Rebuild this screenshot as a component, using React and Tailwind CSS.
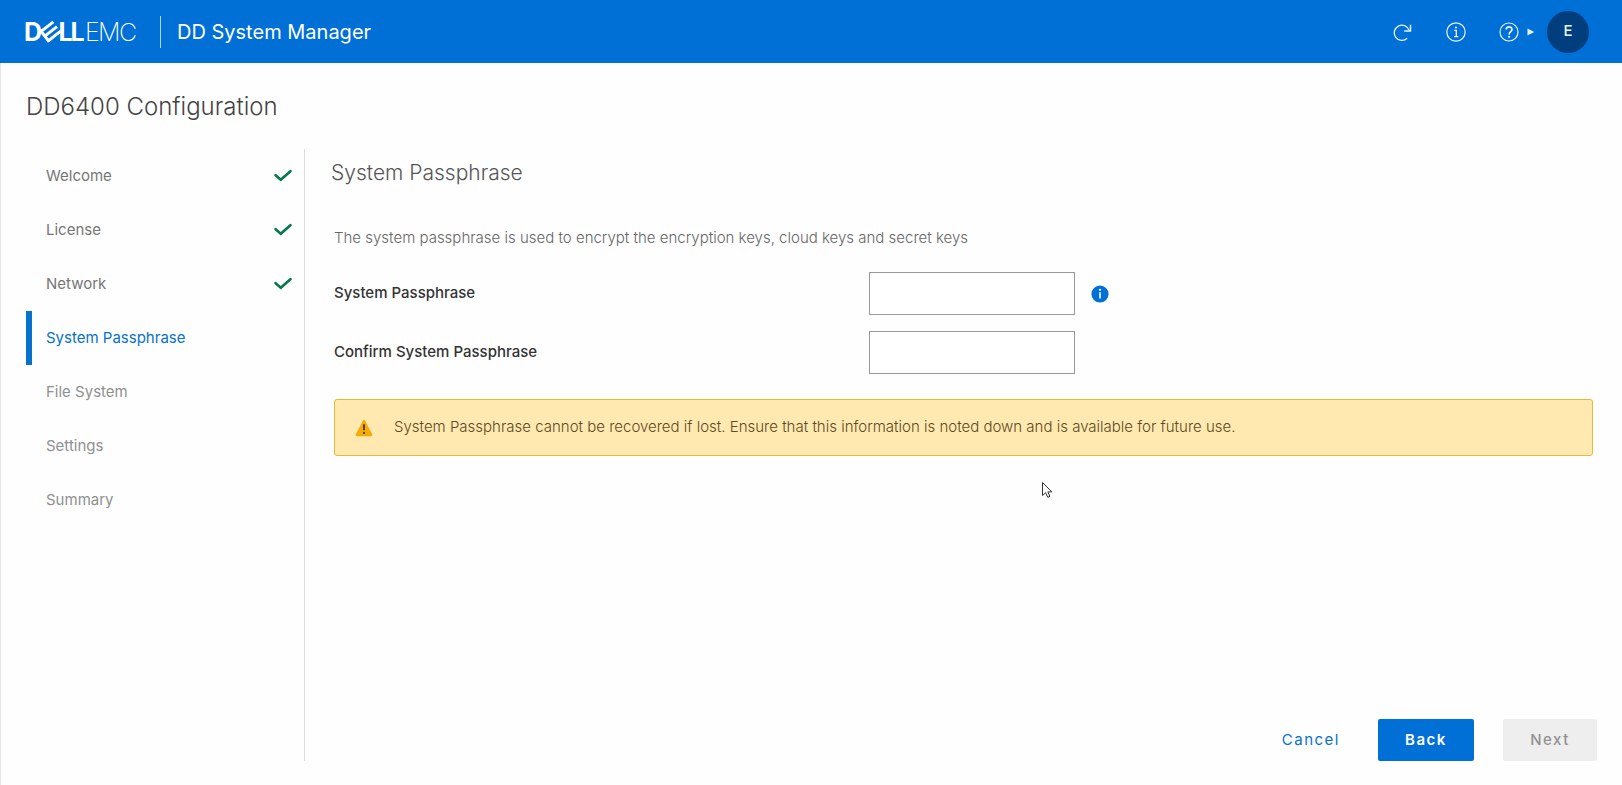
const steps = [
  { label: 'Welcome', state: 'done' },
  { label: 'License', state: 'done' },
  { label: 'Network', state: 'done' },
  { label: 'System Passphrase', state: 'active' },
  { label: 'File System', state: 'pending' },
  { label: 'Settings', state: 'pending' },
  { label: 'Summary', state: 'pending' },
];

const stepTone = {
  done: 'text-[#767676] border-transparent',
  active: 'text-[#0672cb] border-[#0672cb]',
  pending: 'text-[#909090] border-transparent',
};

function Logo() {
  return (
    <svg
      className="h-8 w-28 shrink-0"
      viewBox="0 0 112 32"
      fill="#fff"
      role="img"
      aria-label="Dell EMC"
      fontFamily="Inter, sans-serif"
    >
      <text x="-1" y="25" fontSize="25" fontWeight="700">D</text>
      <g transform="translate(25.3 15.8) rotate(-38)" stroke="#fff" strokeWidth="3" fill="none">
        <path d="M-7 -7.2V7.2" />
        <path d="M-7 -5.9H8.5M-7 0H8.5M-7 5.9H8.5" strokeWidth="2.9" />
      </g>
      <text x="33.5" y="25" fontSize="25" fontWeight="700">L</text>
      <text x="45.5" y="25" fontSize="25" fontWeight="700">L</text>
      <text x="60" y="25" fontSize="25" fontWeight="200">E</text>
      <text x="73" y="25" fontSize="25" fontWeight="200">M</text>
      <text x="94" y="25" fontSize="25" fontWeight="200">C</text>
    </svg>
  );
}

function RefreshIcon() {
  return (
    <svg className="size-5" viewBox="0 0 20 20" fill="none" stroke="currentColor" strokeWidth="1.3">
      <path d="M14.2 16.2A7.6 7.6 0 1 1 16 8.2" />
      <path d="M17.5 2.8V9H11.2" strokeWidth="1.5" />
    </svg>
  );
}

function InfoIcon() {
  return (
    <svg className="size-5" viewBox="0 0 20 20" fill="none" stroke="currentColor">
      <circle cx="10" cy="10" r="9.2" strokeWidth="1.2" />
      <path d="M8.2 8.3H10.3V14.6M8 14.7H12.4" strokeWidth="1.3" />
      <circle cx="10" cy="5.5" r="1.1" fill="currentColor" stroke="none" />
    </svg>
  );
}

function HelpIcon() {
  return (
    <svg className="size-5" viewBox="0 0 20 20" fill="none" stroke="currentColor">
      <circle cx="10" cy="10" r="9" strokeWidth="1.2" />
      <path d="M7.2 7.6C7.2 3.9 13 4 13 7.4C13 9.7 10.1 9.5 10.1 12.4" strokeWidth="1.7" />
      <circle cx="10.1" cy="14.8" r="1.1" fill="currentColor" stroke="none" />
    </svg>
  );
}

function CheckIcon() {
  return (
    <svg className="h-4 w-[18px]" viewBox="0 0 18 16" fill="none" stroke="#04784c" strokeWidth="2.6">
      <path d="M1.6 7.2L6.8 11.8L16.4 3.2" strokeLinecap="round" strokeLinejoin="miter" />
    </svg>
  );
}

function WarningIcon() {
  return (
    <svg className="size-[18px] shrink-0" viewBox="0 0 18 18" aria-hidden="true">
      <path
        d="M8 1.5Q9 .2 10 1.5L17.2 15.2Q17.8 17.2 16 17.2H2Q.2 17.2 .8 15.2Z"
        fill="#f5ab0a"
      />
      <path d="M9 5.2V11.2" stroke="#3b3320" strokeWidth="1.7" />
      <circle cx="9" cy="14" r="1.1" fill="#3b3320" />
    </svg>
  );
}

function PassphraseField({ id, label, info }) {
  return (
    <div className="flex items-center">
      <label htmlFor={id} className="w-[535px] text-[15px] font-medium text-[#333333]">
        {label}
      </label>
      <input
        id={id}
        type="password"
        className="h-[43px] w-[206px] border border-[#999999] bg-white px-3 text-[15px] outline-none"
      />
      {info && (
        <button type="button" aria-label="Passphrase requirements" className="ml-4">
          <svg className="size-[18px]" viewBox="0 0 18 18">
            <circle cx="9" cy="9" r="8.6" fill="#0070d6" />
            <path d="M9 7.3V13.6" stroke="#fff" strokeWidth="1.6" />
            <circle cx="9" cy="4.8" r="1.1" fill="#fff" />
          </svg>
        </button>
      )}
    </div>
  );
}

export default function App() {
  return (
    <div className="flex min-h-screen flex-col bg-[#fefefe] font-['Inter',sans-serif]">
      <header className="flex h-[63px] items-center bg-[#0070d6] pl-[25px] pr-[33px] text-white">
        <Logo />
        <div className="ml-[23px] h-8 w-px bg-white/70" />
        <h1 className="ml-4 text-xl">DD System Manager</h1>
        <div className="ml-auto flex items-center text-[#e4f5ff]">
          <button type="button" aria-label="Refresh">
            <RefreshIcon />
          </button>
          <button type="button" aria-label="Information" className="ml-[33px]">
            <InfoIcon />
          </button>
          <button type="button" aria-label="Help" className="ml-[33px] flex items-center gap-2">
            <HelpIcon />
            <svg className="size-2" viewBox="0 0 8 8" fill="currentColor">
              <path d="M.5 .6L7.2 4L.5 7.4Z" />
            </svg>
          </button>
          <button
            type="button"
            aria-label="Account"
            className="ml-3 size-[42px] rounded-full bg-[#003e7e] text-[15px] font-medium"
          >
            E
          </button>
        </div>
      </header>

      <main className="flex grow flex-col border-l border-[#e4e4e4] pb-6 pl-[25px] pr-[25px]">
        <h2 className="mt-7 text-2xl font-light text-[#444444]">DD6400 Configuration</h2>

        <div className="mt-[26px] flex grow">
          <nav aria-label="Configuration steps" className="w-[279px] shrink-0 border-r border-[#dcdcdc]">
            <ol>
              {steps.map(({ label, state }) => (
                <li key={label}>
                  <a
                    href="#"
                    aria-current={state === 'active' ? 'step' : undefined}
                    className={`flex h-[54px] items-center justify-between border-l-[6px] pl-[14px] pr-3 text-[15px] ${stepTone[state]}`}
                  >
                    {label}
                    {state === 'done' && <CheckIcon />}
                  </a>
                </li>
              ))}
            </ol>
          </nav>

          <section className="flex grow flex-col pl-[26px]">
            <h3 className="mt-2 text-[21px] font-light leading-8 text-[#555555]">System Passphrase</h3>

            <form className="flex grow flex-col">
              <div className="ml-[3px] mr-1">
                <p className="mt-[37px] text-[15px] font-light leading-6 text-[#666666]">
                  The system passphrase is used to encrypt the encryption keys, cloud keys and secret keys
                </p>
                <div className="mt-[22px] flex flex-col gap-4">
                  <PassphraseField id="passphrase" label="System Passphrase" info />
                  <PassphraseField id="confirm-passphrase" label="Confirm System Passphrase" />
                </div>
                <div
                  role="alert"
                  className="mt-[25px] flex h-[57px] items-center rounded-[3px] border border-[#e5b93c] bg-[#ffe9b1] pl-5 text-[15px] font-light text-[#5c4a22]"
                >
                  <WarningIcon />
                  <p className="ml-[21px]">
                    System Passphrase cannot be recovered if lost. Ensure that this information is noted down and is
                    available for future use.
                  </p>
                </div>
              </div>

              <div className="mt-auto flex justify-end text-[15px] tracking-widest">
                <button type="button" className="h-[42px] px-[38px] text-[#0672cb]">
                  Cancel
                </button>
                <button type="button" className="h-[42px] w-24 rounded-xs bg-[#0070d6] font-semibold text-white">
                  Back
                </button>
                <button
                  type="submit"
                  disabled
                  className="ml-[29px] h-[42px] w-[94px] rounded-xs bg-[#eeeeee] font-medium text-[#919191]"
                >
                  Next
                </button>
              </div>
            </form>
          </section>
        </div>
      </main>

      <svg
        className="pointer-events-none absolute left-[1041px] top-[481px] h-[18px] w-3"
        viewBox="0 0 12 18"
        fill="#fff"
        stroke="#333"
        aria-hidden="true"
      >
        <path d="M1.5 1.5V14.5L4.6 11.7L6.8 16.3L8.9 15.3L6.8 10.9H10.9Z" />
      </svg>
    </div>
  );
}
